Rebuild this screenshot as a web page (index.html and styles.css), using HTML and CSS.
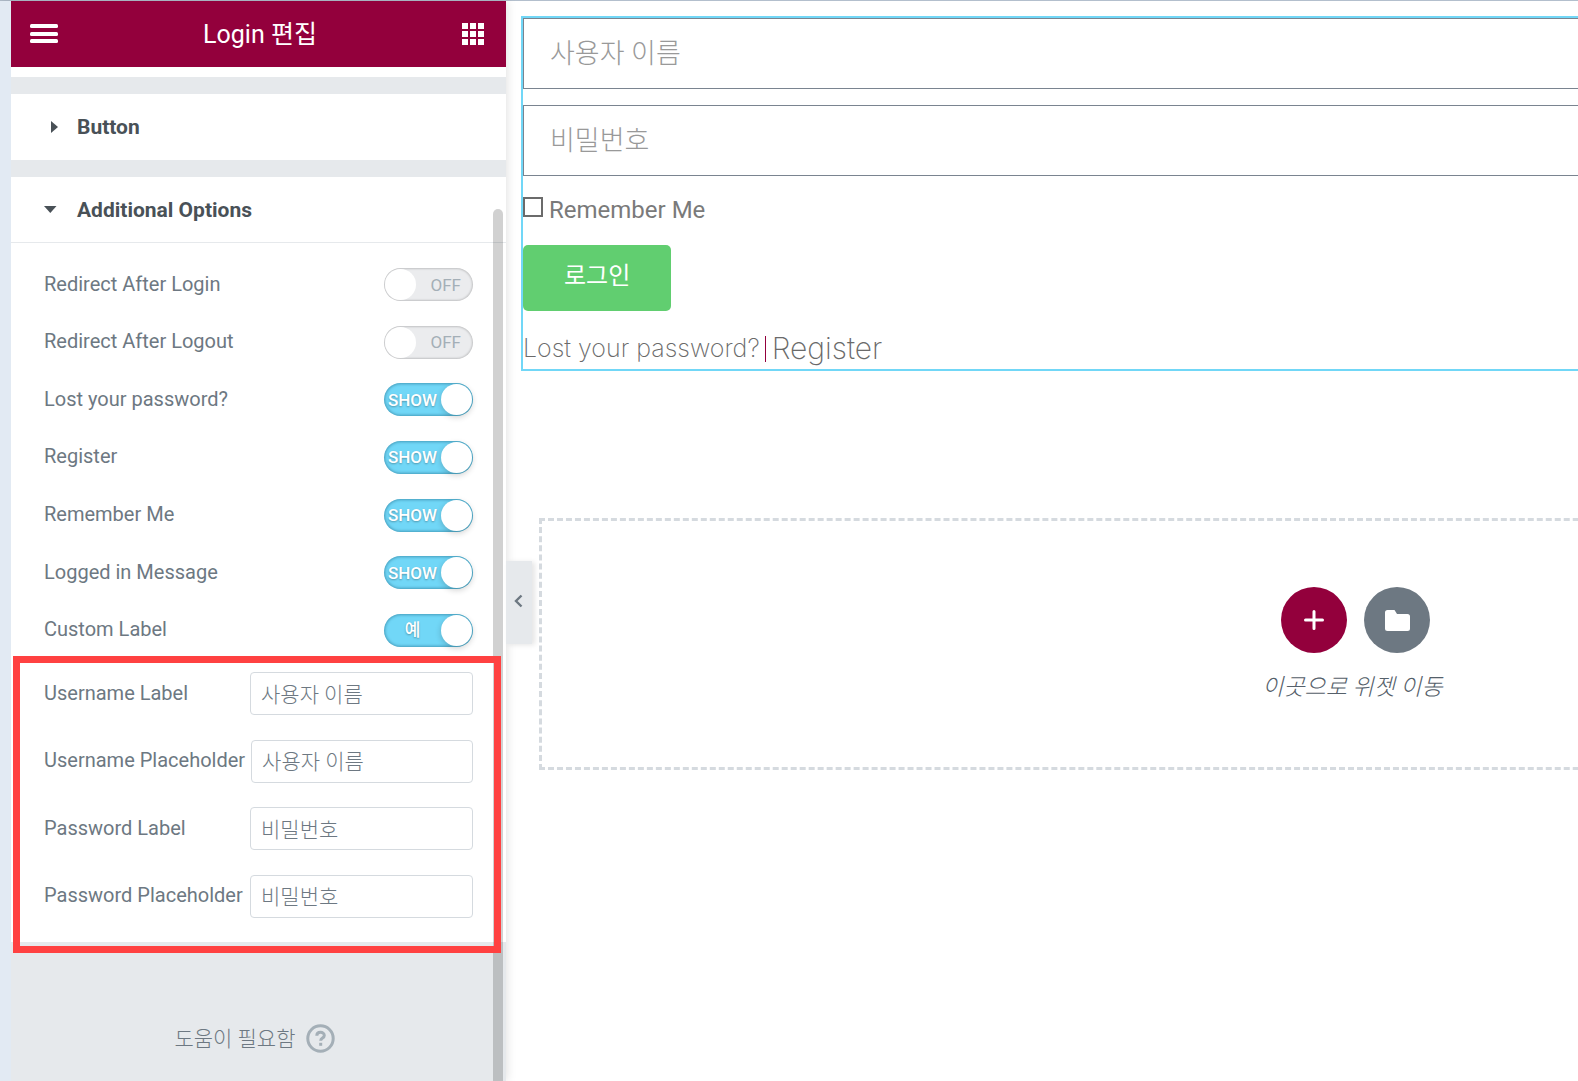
FILE: index.html
```html
<!DOCTYPE html>
<html lang="ko">
<head>
<meta charset="utf-8">
<meta name="viewport" content="width=device-width, initial-scale=1">
<title>Login 편집</title>
<link rel="stylesheet" href="styles.css">
</head>
<body>
<div class="editor">
  <aside class="panel">
    <header class="panel-header">
      <button class="icon-button" type="button" aria-label="Menu">
        <svg width="28" height="20" viewBox="0 0 28 20" fill="#fff"><rect width="28" height="4" rx="1.5"/><rect y="8" width="28" height="4" rx="1.5"/><rect y="15" width="28" height="4" rx="1.5"/></svg>
      </button>
      <h1 class="panel-title">Login 편집</h1>
      <button class="icon-button" type="button" aria-label="Widgets">
        <svg width="22" height="22" viewBox="0 0 22 22" fill="#fff"><path d="M0 0h6v6H0zM8 0h6v6H8zM16 0h6v6h-6zM0 8h6v6H0zM8 8h6v6H8zM16 8h6v6h-6zM0 16h6v6H0zM8 16h6v6H8zM16 16h6v6h-6z"/></svg>
      </button>
    </header>
    <div class="panel-body">
      <div class="section-end"></div>
      <section class="section">
        <button class="section-heading" type="button" aria-expanded="false">
          <svg class="caret" width="14" height="12" viewBox="0 0 14 12"><path d="M7 0l7 6-7 6z" fill="#495157"/></svg>
          Button
        </button>
      </section>
      <section class="section">
        <button class="section-heading open" type="button" aria-expanded="true">
          <svg class="caret" width="14" height="12" viewBox="0 0 14 12"><path d="M0 2h12.500L6.300 9z" fill="#495157"/></svg>
          Additional Options
        </button>
        <div class="controls">
          <div class="toggles">
            <label class="control"><span>Redirect After Login</span><span class="switch"><input type="checkbox"><span class="state">OFF</span></span></label>
            <label class="control"><span>Redirect After Logout</span><span class="switch"><input type="checkbox"><span class="state">OFF</span></span></label>
            <label class="control"><span>Lost your password?</span><span class="switch"><input type="checkbox" checked><span class="state">SHOW</span></span></label>
            <label class="control"><span>Register</span><span class="switch"><input type="checkbox" checked><span class="state">SHOW</span></span></label>
            <label class="control"><span>Remember Me</span><span class="switch"><input type="checkbox" checked><span class="state">SHOW</span></span></label>
            <label class="control"><span>Logged in Message</span><span class="switch"><input type="checkbox" checked><span class="state">SHOW</span></span></label>
            <label class="control"><span>Custom Label</span><span class="switch"><input type="checkbox" checked><span class="state">예</span></span></label>
          </div>
          <div class="texts">
            <div class="control"><label for="user-label">Username Label</label><input class="text-input" id="user-label" type="text" value="사용자 이름"></div>
            <div class="control"><label for="user-hint">Username Placeholder</label><input class="text-input" id="user-hint" type="text" value="사용자 이름"></div>
            <div class="control"><label for="pass-label">Password Label</label><input class="text-input" id="pass-label" type="text" value="비밀번호"></div>
            <div class="control"><label for="pass-hint">Password Placeholder</label><input class="text-input" id="pass-hint" type="text" value="비밀번호"></div>
            <div class="highlight"></div>
          </div>
        </div>
      </section>
      <a class="help" href="#">도움이 필요함
        <svg width="29" height="29" viewBox="0 0 29 29" fill="none" stroke="#a4afb7" stroke-width="3"><circle cx="14.500" cy="14.500" r="12.700"/><path d="M10.800 11.800c0-4.600 7.500-4.600 7.500-.3 0 2.700-3.600 2.500-3.600 5.300"/><path d="M14.700 18.800v3"/></svg>
      </a>
    </div>
    <div class="scrollbar"></div>
    <button class="collapse" type="button" aria-label="Collapse panel">
      <svg width="9" height="14" viewBox="0 0 9 14" fill="none" stroke="#6d7882" stroke-width="2.400"><path d="M7.500 1.500L2 7l5.500 5.500"/></svg>
    </button>
  </aside>
  <main class="preview">
    <div class="canvas">
      <form class="login">
        <input class="login-input" type="text" placeholder="사용자 이름" aria-label="사용자 이름">
        <input class="login-input" type="password" placeholder="비밀번호" aria-label="비밀번호">
        <label class="remember"><input type="checkbox">Remember Me</label>
        <button class="submit" type="button">로그인</button>
        <div class="links"><a class="lost" href="#">Lost your password?</a><span class="divider"></span><a class="register" href="#">Register</a></div>
      </form>
      <div class="drop-zone">
        <div class="drop-actions">
          <button class="round add" type="button" aria-label="Add section"><svg width="20" height="20" viewBox="0 0 20 20" stroke="#fff" stroke-width="3" stroke-linecap="round"><path d="M10 1.500v17M1.500 10h17"/></svg></button>
          <button class="round folder" type="button" aria-label="Add template"><svg width="25" height="21" viewBox="0 0 25 21" fill="#fff"><path d="M2.500 0h7l2.500 4h10.500q2.500 0 2.500 2.500v12q0 2.500-2.500 2.500h-20Q0 21 0 18.500v-16Q0 0 2.500 0z"/></svg></button>
        </div>
        <p class="drop-text">이곳으로 위젯 이동</p>
      </div>
    </div>
  </main>
</div>
</body>
</html>
```
FILE: styles.css
```css
* { box-sizing: border-box; }

body {
  margin: 0;
  font-family: Roboto, "Noto Sans CJK KR", sans-serif;
  font-size: 20px;
  line-height: 24px;
  color: #6d7882;
  background: #fff;
}

button, input { font: inherit; color: inherit; margin: 0; }
button { border: 0; padding: 0; background: none; }
svg { display: block; flex: none; }

.editor {
  display: flex;
  min-height: 100vh;
  border-top: 1px solid #b3bfcd;
}

/* Panel */
.panel {
  position: relative;
  z-index: 1;
  display: flex;
  flex-direction: column;
  flex: none;
  width: 506px;
  border-left: 11px solid #e2eaf3;
  background: #e6e9ec;
  box-shadow: 0 0 10px rgba(0, 0, 0, .15);
}

.panel-header {
  display: flex;
  align-items: center;
  justify-content: space-between;
  height: 66px;
  padding: 0 22px 0 19px;
  background: #93003c;
  color: #fff;
}

.panel-title {
  margin: 0;
  padding-top: 2px;
  font-size: 25px;
  font-weight: 400;
}

.section-end { height: 10px; background: #fff; }
.section { margin-top: 17px; background: #fff; }

.section-heading {
  display: flex;
  align-items: center;
  gap: 19px;
  width: 100%;
  height: 66px;
  padding: 0 33px;
  font-size: 21px;
  font-weight: 700;
  color: #495157;
}

.section-heading.open { border-bottom: 1px solid #e6e9ec; }
.controls { padding: 25px 33px 24px; }

.toggles, .texts {
  display: flex;
  flex-direction: column;
  justify-content: space-between;
}

.toggles { min-height: 379px; }
.texts { position: relative; min-height: 246px; margin-top: 25px; }

.control {
  display: flex;
  align-items: center;
  justify-content: space-between;
  gap: 6px;
  white-space: nowrap;
}

.control > :first-child { padding-bottom: 2px; }

.switch {
  display: grid;
  align-items: center;
  width: 89px;
  height: 33px;
  border-radius: 17px;
  background: #ebecee;
  box-shadow: inset 0 0 2px 1px rgba(0, 0, 0, .18);
  font-size: 17px;
  color: #a4afb7;
}

.switch input {
  grid-area: 1 / 1;
  justify-self: start;
  width: 31px;
  height: 31px;
  margin: 0 1px;
  appearance: none;
  border-radius: 50%;
  background: #fff;
}

.state {
  grid-area: 1 / 1;
  justify-self: end;
  padding-right: 12px;
}

.switch:has(:checked) {
  background: #71d7f7;
  box-shadow: inset 0 0 3px 1px rgba(0, 70, 100, .4);
  color: #fff;
  font-weight: 500;
  text-shadow: 0 1px 2px rgba(0, 0, 0, .3);
}

.switch input:checked {
  justify-self: end;
  box-shadow: 0 2px 6px rgba(0, 0, 0, .2);
}

.switch input:checked + .state {
  justify-self: start;
  width: 57px;
  padding: 0;
  text-align: center;
}

.text-input {
  flex: 0 1 223px;
  min-width: 0;
  height: 43px;
  padding: 0 10px 2px;
  border: 1px solid #d5dadf;
  border-radius: 4px;
  background: #fff;
  font-size: 21px;
  font-weight: 300;
}

.highlight {
  position: absolute;
  inset: -16px -28px -35px -31px;
  border: 7px solid #ff4141;
  z-index: 2;
  pointer-events: none;
}

.help {
  display: flex;
  align-items: center;
  justify-content: center;
  gap: 10px;
  margin-top: 82px;
  padding: 0 8px 27px 0;
  font-size: 21px;
  font-weight: 300;
  color: #6d7882;
  text-decoration: none;
}

.scrollbar {
  position: absolute;
  top: 208px;
  right: 3px;
  bottom: 0;
  width: 10px;
  border-radius: 5px 5px 0 0;
  background: rgba(0, 0, 0, .18);
}

.collapse {
  position: absolute;
  top: 560px;
  left: 100%;
  width: 26px;
  height: 83px;
  padding: 0 0 4px 8px;
  background: #e6e9ec;
  box-shadow: 3px 1px 5px rgba(0, 0, 0, .1);
}

/* Preview: the page is wider than the visible area */
.preview {
  flex: 1;
  min-width: 0;
  overflow: hidden;
  padding: 15px 0 0 15px;
}

.canvas { width: calc(100% + 627px); }

.login {
  display: flex;
  flex-direction: column;
  align-items: flex-start;
  border: 2px solid #71d7f7;
}

.login-input {
  width: 100%;
  height: 71px;
  margin-bottom: 16px;
  padding: 0 26px;
  border: 1px solid #7a8490;
  font-size: 27px;
  font-weight: 300;
}

.login-input::placeholder { color: #999; }

.remember {
  display: flex;
  align-items: center;
  gap: 6px;
  margin-top: 5px;
  font-size: 24px;
  color: #7a7a7a;
}

.remember input {
  width: 20px;
  height: 20px;
  margin-bottom: 6px;
  appearance: none;
  border: 2px solid #6b6b6b;
  background: #fff;
}

.submit {
  height: 66px;
  margin-top: 22px;
  padding: 0 41px 4px;
  border-radius: 5px;
  background: #61ce70;
  font-size: 24px;
  color: #fff;
}

.links {
  display: flex;
  align-items: center;
  margin: 20px 0 2px;
  font-family: Inter, sans-serif;
  font-weight: 200;
  line-height: 36px;
}

.links a { padding-bottom: 2px; color: #6a6a6a; text-decoration: none; line-height: 34px; }
.lost { font-size: 25px; }
.register { font-size: 30px; }

.divider {
  width: 1px;
  height: 26px;
  margin: 0 6px 0 5px;
  background: #93003c;
}

.drop-zone {
  display: flex;
  flex-direction: column;
  align-items: center;
  margin: 147px 33px 0 18px;
  padding: 66px 0 65px;
  border: 3px dashed #d5dadf;
}

.drop-actions { display: flex; gap: 17px; }

.round {
  display: grid;
  place-items: center;
  width: 66px;
  height: 66px;
  border-radius: 50%;
}

.add { background: #93003c; }
.folder { background: #6d7882; }

.drop-text {
  margin: 21px 0 0;
  padding-right: 6px;
  font-size: 23px;
  font-style: italic;
  font-weight: 300;
  line-height: 28px;
  color: #55606a;
}
```
